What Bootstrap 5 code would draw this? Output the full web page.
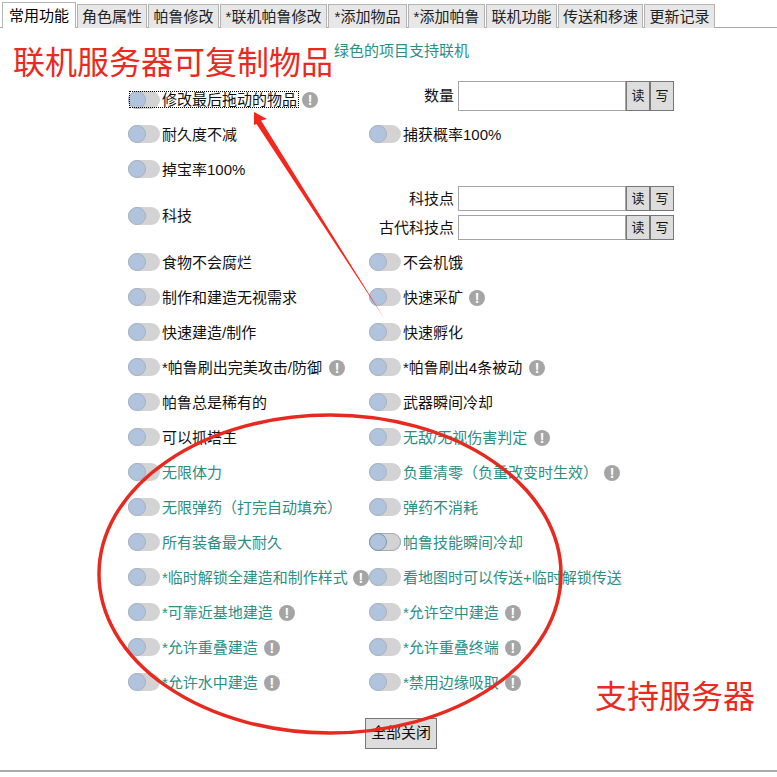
<!DOCTYPE html>
<html lang="zh-CN">
<head>
<meta charset="utf-8">
<title>常用功能</title>
<link href="https://cdn.jsdelivr.net/npm/bootstrap@5.3.0/dist/css/bootstrap.min.css" rel="stylesheet">
<style>
html,body{height:100%}
body{margin:0;background:#fff;color:#111;font:15px/20px "Liberation Sans","Noto Sans CJK SC",sans-serif;overflow:hidden}
.app-page{position:relative;width:777px;height:772px;border-bottom:2px solid #aaa}
.tab-strip{display:flex;height:28px;padding:2px 0 0 2px;border-bottom:1px solid #a8a8a8;gap:1px}
.tab-item{display:flex;align-items:center;justify-content:center;margin-top:2px;height:24px;background:#e7e7e7;border:1px solid #b4b4b4;border-bottom:0;color:#222}
.tab-item.on{margin-top:0;height:26px;background:#fff;margin-bottom:-1px;z-index:1;color:#000}
.note-line{height:54px;padding:13px 0 0 334px;color:#2a8f85}
.fn-row{display:flex;height:35px;padding-left:128px;align-items:center}
.fn-row.tall{height:58px}
.fn-cell{width:241px;flex:none;display:flex;align-items:center;height:100%;white-space:nowrap}
.fn-cell.green{color:#2a8f85}
.sw{flex:none;position:relative;display:block;width:32px;height:18px;margin-top:-1px;border-radius:9px;background:#d3d3d3;margin-right:2px}
.sw::before{content:"";position:absolute;left:0;top:0;width:18px;height:18px;border-radius:50%;background:#b0c4de;border:1px solid #a6b1c0}
.sw.hot{box-shadow:inset 0 0 0 1px #a3adb2}
.sw.hot::before{border-color:#7d98a5}
.tip{flex:none;display:inline-block;width:16px;height:16px;border-radius:50%;background:#a5a5a5;color:#fff;font:bold 14px/16px "Liberation Sans",sans-serif;text-align:center;margin-left:6px}
.tip.wide{margin-left:7px}
.tip.tight{margin-left:5px}
.tip.snug{margin-left:3px}
.focus-box{position:relative;display:flex;align-items:center;height:17px;margin-left:1px;padding-right:2px}
.focus-box::after{content:"";position:absolute;inset:0;border:1px dotted #000}
.focus-box .sw{margin-left:-1px;margin-top:0}
.field-row{display:flex;align-items:stretch;width:305px;justify-content:flex-end;white-space:nowrap}
.field-row label{margin:0 4px 0 0;display:flex;align-items:center}
.val-box{width:168px;height:25px;border:1px solid #a5a5a5;background:#fff;padding:0 3px;border-radius:0;outline:0}
.act-btn{width:24px;height:25px;padding:0;background:#ddd;border:1px solid #777;border-radius:0;font-size:13px;line-height:20px;color:#111}
.field-row.big .val-box,.field-row.big .act-btn{height:30px}
.field-stack{display:flex;flex-direction:column;gap:4px;align-self:flex-start;margin-top:-1px}
.top-cell{align-self:flex-start;margin-top:-1px}
.bottom-bar{display:flex;padding:17.5px 0 0 365px}
.close-all{width:72px;height:31px;padding:0;background:#ddd;border:1px solid #777;border-radius:0;font-size:15px;color:#111}
.over-art{position:absolute;left:0;top:0;pointer-events:none}
.red-note{position:absolute;color:#ea2a20;font-size:32px;line-height:40px;white-space:nowrap;pointer-events:none}
.red-a{left:13px;top:43px}
.red-b{left:595px;top:677px}
</style>
</head>
<body>
<div class="app-page">
  <div class="tab-strip">
    <div class="tab-item on" style="width:74px">常用功能</div>
    <div class="tab-item" style="width:70px">角色属性</div>
    <div class="tab-item" style="width:71px">帕鲁修改</div>
    <div class="tab-item" style="width:107px">*联机帕鲁修改</div>
    <div class="tab-item" style="width:79px">*添加物品</div>
    <div class="tab-item" style="width:77px">*添加帕鲁</div>
    <div class="tab-item" style="width:71px">联机功能</div>
    <div class="tab-item" style="width:85px">传送和移速</div>
    <div class="tab-item" style="width:71px">更新记录</div>
  </div>
  <div class="note-line">绿色的项目支持联机</div>

  <div class="fn-row">
    <div class="fn-cell"><span class="focus-box"><i class="sw"></i>修改最后拖动的物品</span><span class="tip snug">!</span></div>
    <div class="field-row big top-cell"><label>数量</label><input class="val-box" aria-label="数量"><button class="act-btn" type="button">读</button><button class="act-btn" type="button">写</button></div>
  </div>
  <div class="fn-row">
    <div class="fn-cell"><i class="sw"></i>耐久度不减</div>
    <div class="fn-cell"><i class="sw"></i>捕获概率100%</div>
  </div>
  <div class="fn-row">
    <div class="fn-cell"><i class="sw"></i>掉宝率100%</div>
  </div>
  <div class="fn-row tall">
    <div class="fn-cell"><i class="sw"></i>科技</div>
    <div class="field-stack">
      <div class="field-row"><label>科技点</label><input class="val-box" aria-label="科技点"><button class="act-btn" type="button">读</button><button class="act-btn" type="button">写</button></div>
      <div class="field-row"><label>古代科技点</label><input class="val-box" aria-label="古代科技点"><button class="act-btn" type="button">读</button><button class="act-btn" type="button">写</button></div>
    </div>
  </div>
  <div class="fn-row">
    <div class="fn-cell"><i class="sw"></i>食物不会腐烂</div>
    <div class="fn-cell"><i class="sw"></i>不会机饿</div>
  </div>
  <div class="fn-row">
    <div class="fn-cell"><i class="sw"></i>制作和建造无视需求</div>
    <div class="fn-cell"><i class="sw"></i>快速采矿<span class="tip">!</span></div>
  </div>
  <div class="fn-row">
    <div class="fn-cell"><i class="sw"></i>快速建造/制作</div>
    <div class="fn-cell"><i class="sw"></i>快速孵化</div>
  </div>
  <div class="fn-row">
    <div class="fn-cell"><i class="sw"></i>*帕鲁刷出完美攻击/防御<span class="tip wide">!</span></div>
    <div class="fn-cell"><i class="sw"></i>*帕鲁刷出4条被动<span class="tip wide">!</span></div>
  </div>
  <div class="fn-row">
    <div class="fn-cell"><i class="sw"></i>帕鲁总是稀有的</div>
    <div class="fn-cell"><i class="sw"></i>武器瞬间冷却</div>
  </div>
  <div class="fn-row">
    <div class="fn-cell"><i class="sw"></i>可以抓塔主</div>
    <div class="fn-cell green"><i class="sw"></i>无敌/无视伤害判定<span class="tip wide">!</span></div>
  </div>
  <div class="fn-row">
    <div class="fn-cell green"><i class="sw"></i>无限体力</div>
    <div class="fn-cell green"><i class="sw"></i>负重清零（负重改变时生效）<span class="tip">!</span></div>
  </div>
  <div class="fn-row">
    <div class="fn-cell green"><i class="sw"></i>无限弹药（打完自动填充）</div>
    <div class="fn-cell green"><i class="sw"></i>弹药不消耗</div>
  </div>
  <div class="fn-row">
    <div class="fn-cell green"><i class="sw"></i>所有装备最大耐久</div>
    <div class="fn-cell green"><i class="sw hot"></i>帕鲁技能瞬间冷却</div>
  </div>
  <div class="fn-row">
    <div class="fn-cell green"><i class="sw"></i>*临时解锁全建造和制作样式<span class="tip tight">!</span></div>
    <div class="fn-cell green"><i class="sw"></i>看地图时可以传送+临时解锁传送</div>
  </div>
  <div class="fn-row">
    <div class="fn-cell green"><i class="sw"></i>*可靠近基地建造<span class="tip">!</span></div>
    <div class="fn-cell green"><i class="sw"></i>*允许空中建造<span class="tip">!</span></div>
  </div>
  <div class="fn-row">
    <div class="fn-cell green"><i class="sw"></i>*允许重叠建造<span class="tip">!</span></div>
    <div class="fn-cell green"><i class="sw"></i>*允许重叠终端<span class="tip">!</span></div>
  </div>
  <div class="fn-row">
    <div class="fn-cell green"><i class="sw"></i>*允许水中建造<span class="tip">!</span></div>
    <div class="fn-cell green"><i class="sw"></i>*禁用边缘吸取<span class="tip">!</span></div>
  </div>
  <div class="bottom-bar"><button class="close-all" type="button">全部关闭</button></div>

  <svg class="over-art" width="777" height="772" viewBox="0 0 777 772" aria-hidden="true">
    <ellipse cx="330" cy="574" rx="231" ry="159" fill="none" stroke="#e8291f" stroke-width="3.5"/>
    <polygon points="254,112 267,119 261,120.5 384,318 256.5,124 254,125" fill="#f5261b"/>
  </svg>
  <div class="red-note red-a">联机服务器可复制物品</div>
  <div class="red-note red-b">支持服务器</div>
</div>
</body>
</html>
